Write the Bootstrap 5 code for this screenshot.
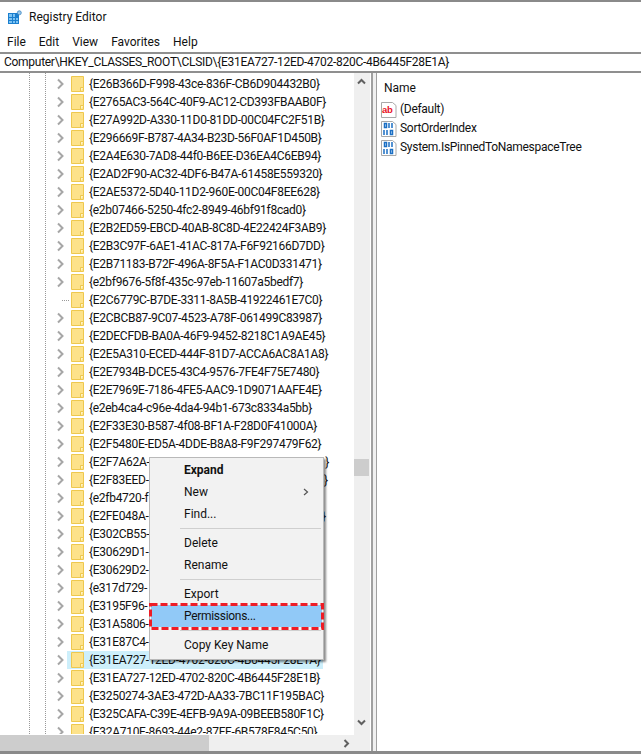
<!DOCTYPE html>
<html lang="en"><head><meta charset="utf-8"><title>Registry Editor</title>
<link href="https://cdn.jsdelivr.net/npm/bootstrap@5.3.0/dist/css/bootstrap.min.css" rel="stylesheet">
<style>
html,body{height:100%;margin:0;overflow:hidden}
body{font-family:Roboto,"Noto Sans",sans-serif;font-size:12px;color:#111;background:#fff}
.win{width:641px;height:754px;border-top:2px solid #8a8a8a;border-bottom:3px solid #8a8a8a;position:relative}
.titlebar{height:30px;gap:7px;padding-left:8px}
.menubar{height:20px;gap:13px;padding-left:7px}
.addr{height:21px;border-top:2px solid #8f8f8f;border-bottom:2px solid #8f8f8f;padding-left:4px;white-space:nowrap;line-height:17px;letter-spacing:-.28px}
.main{height:678px}
.treepane{width:371px;position:relative}
.splitter{width:6px;background:#f0f0f0;border-left:2px solid #a0a0a0;border-right:1px solid #a0a0a0}
.listpane{flex:1;padding:6px 0 0 5px}
.treebody{height:661px;overflow:hidden;position:relative;padding-top:2px;letter-spacing:-.29px}
.vbar{width:16px;background:#efefef;position:relative;flex:none;margin-right:1px}
.thumb{position:absolute;left:0;width:15px;top:386px;height:17px;background:#cdcdcd}
.hbar{height:16px;background:#efefef;position:relative;margin-right:1px}
.hthumb{height:16px;width:209px;background:#cdcdcd}
.rw{height:18px;white-space:nowrap;position:relative;padding-left:89px;line-height:18px;display:flex;align-items:center}
.rw .gl{position:absolute;left:56px;top:3px}
.rw .fd{position:absolute;left:71px;top:1px}
.rw.hot{margin-left:67px;padding-left:22px;width:256px;background:#cdeffb}
.rw.hot .gl{left:-11px}.rw.hot .fd{left:4px}
.guide{position:absolute;top:0;bottom:0;width:0;border-left:1px dotted #999}
.tick{position:absolute;left:62px;top:9px;width:7px;border-top:1px dotted #999}
.colname{height:18px;padding-left:2px;line-height:18px;margin-bottom:3px}
.val{height:19px;gap:3px;line-height:19px;white-space:nowrap;margin-left:-1px;letter-spacing:-.29px}
.ctx{position:absolute;left:149px;top:455px;width:175px;height:203px;background:#f2f2f2;border:1px solid #b9b9b9;box-shadow:2px 2px 2px rgba(0,0,0,.45);padding-top:1px}
.mi{height:22px;line-height:22px;padding-left:34px;position:relative;color:#111}
.mi.b{font-weight:700}
.sp{height:1px;background:#cfcfcf;margin:3px 2px 3px 30px}
.perm{margin:0 1px;padding-left:33px;background:#91c9f7;letter-spacing:-.3px}
.redbox{position:absolute;left:-1px;top:145px;pointer-events:none;z-index:2}
.ar{position:absolute;right:14px;top:7px}
</style></head><body>
<div class="win d-flex flex-column">
 <div class="titlebar d-flex align-items-center">
  <svg width="14" height="14" viewBox="0 0 14 14"><rect x="0" y="3" width="11" height="11" fill="#1b7fcf"/><path d="M1 4h3v3H1zM5 4h2v3H5zM1 8h3v2H1zM5 8h2v2H5zM8 8h2v2H8zM1 11h3v2H1zM5 11h2v2H5zM8 11h2v2H8z" fill="#7cc3f3"/><circle cx="11.3" cy="2.8" r="2" fill="#9cc9ea" stroke="#3d86c0" stroke-width=".8"/></svg>
  <span>Registry Editor</span>
 </div>
 <div class="menubar d-flex align-items-center"><span>File</span><span>Edit</span><span>View</span><span>Favorites</span><span>Help</span></div>
 <div class="addr">Computer\HKEY_CLASSES_ROOT\CLSID\{E31EA727-12ED-4702-820C-4B6445F28E1A}</div>
 <div class="main d-flex">
  <div class="treepane d-flex flex-column">
   <div class="d-flex flex-grow-1" style="min-height:0">
    <div class="treebody flex-grow-1" id="tree"><div class="guide" style="left:29px"></div><div class="guide" style="left:45px"></div></div>
    <div class="vbar">
      <svg class="position-absolute" style="left:3px;top:5px" width="9" height="7" viewBox="0 0 9 7"><path d="M1 5.500 4.500 2 8 5.500" fill="none" stroke="#606060" stroke-width="2"/></svg>
      <div class="thumb"></div>
      <svg class="position-absolute" style="left:3px;bottom:9px" width="9" height="7" viewBox="0 0 9 7"><path d="M1 1.500 4.500 5 8 1.500" fill="none" stroke="#606060" stroke-width="2"/></svg>
    </div>
   </div>
   <div class="hbar"><div class="hthumb"></div><svg class="position-absolute" style="right:20px;top:4px" width="7" height="9" viewBox="0 0 7 9"><path d="M1.500 1 5 4.500 1.500 8" fill="none" stroke="#606060" stroke-width="2"/></svg></div>
  </div>
  <div class="splitter"></div>
  <div class="listpane">
   <div class="colname">Name</div>
   <div class="val d-flex align-items-center"><svg width="16" height="16" viewBox="0 0 16 16"><path d="M.5.500h11l3.500 3v12H.5z" fill="#fff" stroke="#a9a9a9"/><text x="1" y="11" font-size="9.500" font-weight="700" font-family="Liberation Sans" fill="#e8121f">ab</text></svg><span>(Default)</span></div>
   <div class="val d-flex align-items-center"><svg width="16" height="16" viewBox="0 0 16 16"><path d="M.5.500h11l3.500 3v12H.5z" fill="#fff" stroke="#a9a9a9"/><path d="M3.500 2.500h2v4h-2zM8 2v5M11 2v5M3 9v5M6 9v5M9.500 9.500h2v4h-2z" fill="none" stroke="#1b6fc4" stroke-width="1.500"/></svg><span>SortOrderIndex</span></div>
   <div class="val d-flex align-items-center"><svg width="16" height="16" viewBox="0 0 16 16"><path d="M.5.500h11l3.500 3v12H.5z" fill="#fff" stroke="#a9a9a9"/><path d="M3.500 2.500h2v4h-2zM8 2v5M11 2v5M3 9v5M6 9v5M9.500 9.500h2v4h-2z" fill="none" stroke="#1b6fc4" stroke-width="1.500"/></svg><span>System.IsPinnedToNamespaceTree</span></div>
  </div>
 </div>
 <div class="ctx">
  <div class="mi b">Expand</div>
  <div class="mi">New<svg class="ar" width="6" height="8" viewBox="0 0 6 8"><path d="M1 1 4.500 4 1 7" fill="none" stroke="#555" stroke-width="1.200"/></svg></div>
  <div class="mi">Find...</div>
  <div class="sp"></div>
  <div class="mi">Delete</div>
  <div class="mi">Rename</div>
  <div class="sp"></div>
  <div class="mi">Export</div>
  <div class="mi perm">Permissions...</div>
  <div class="sp"></div>
  <div class="mi">Copy Key Name</div>
  <svg class="redbox" width="175" height="27" viewBox="0 0 175 27"><rect x="1.500" y="1.500" width="172" height="24" fill="none" stroke="#ee1c25" stroke-width="3" stroke-dasharray="7 3"/></svg>
 </div>
</div>
<script>
var ids=["{E26B366D-F998-43ce-836F-CB6D904432B0}","{E2765AC3-564C-40F9-AC12-CD393FBAAB0F}","{E27A992D-A330-11D0-81DD-00C04FC2F51B}","{E296669F-B787-4A34-B23D-56F0AF1D450B}","{E2A4E630-7AD8-44f0-B6EE-D36EA4C6EB94}","{E2AD2F90-AC32-4DF6-B47A-61458E559320}","{E2AE5372-5D40-11D2-960E-00C04F8EE628}","{e2b07466-5250-4fc2-8949-46bf91f8cad0}","{E2B2ED59-EBCD-40AB-8C8D-4E22424F3AB9}","{E2B3C97F-6AE1-41AC-817A-F6F92166D7DD}","{E2B71183-B72F-496A-8F5A-F1AC0D331471}","{e2bf9676-5f8f-435c-97eb-11607a5bedf7}","{E2C6779C-B7DE-3311-8A5B-41922461E7C0}","{E2CBCB87-9C07-4523-A78F-061499C83987}","{E2DECFDB-BA0A-46F9-9452-8218C1A9AE45}","{E2E5A310-ECED-444F-81D7-ACCA6AC8A1A8}","{E2E7934B-DCE5-43C4-9576-7FE4F75E7480}","{E2E7969E-7186-4FE5-AAC9-1D9071AAFE4E}","{e2eb4ca4-c96e-4da4-94b1-673c8334a5bb}","{E2F33E30-B587-4f08-BF1A-F28D0F41000A}","{E2F5480E-ED5A-4DDE-B8A8-F9F297479F62}","{E2F7A62A-","{E2F83EED-","{e2fb4720-f","{E2FE048A-","{E302CB55-","{E30629D1-","{E30629D2-","{e317d729-","{E3195F96-","{E31A5806-","{E31E87C4-","{E31EA727-12ED-4702-820C-4B6445F28E1A}","{E31EA727-12ED-4702-820C-4B6445F28E1B}","{E3250274-3AE3-472D-AA33-7BC11F195BAC}","{E325CAFA-C39E-4EFB-9A9A-09BEEB580F1C}","{E32A710F-8693-44e2-87FF-6B578F845C50}"];
var tails={21:"E8D4-4BD1-AB8E-A1DCEA18EAD1}",22:"E8D4-4BD1-AB8E-ABDCEA18EA15}",24:"E8D4-4B11-AB8E-A1DCEA18E1D1}"};
var t=document.getElementById('tree');
var fd='<svg class="fd" width="13" height="16" viewBox="0 0 13 16"><path d="M.5.500h12v15H.5z" fill="#fde28a" stroke="#eec84e"/><path d="M9.500 15.500v-4h3" fill="#fff3c4" stroke="#eec84e"/></svg>';
var gl='<svg class="gl" width="9" height="12" viewBox="0 0 9 12"><path d="M2 1.500 6.500 6 2 10.500" fill="none" stroke="#a6a6a6" stroke-width="2"/></svg>';
ids.forEach(function(s,i){
 var d=document.createElement('div');d.className='rw'+(i==32?' hot':'');
 d.innerHTML=(i==12?'<span class="tick"></span>':gl)+fd+'<span></span>';
 d.lastChild.textContent=s+(tails[i]||'');
 t.appendChild(d);
});
</script>
<script src="https://cdn.jsdelivr.net/npm/bootstrap@5.3.0/dist/js/bootstrap.bundle.min.js"></script>
</body></html>
